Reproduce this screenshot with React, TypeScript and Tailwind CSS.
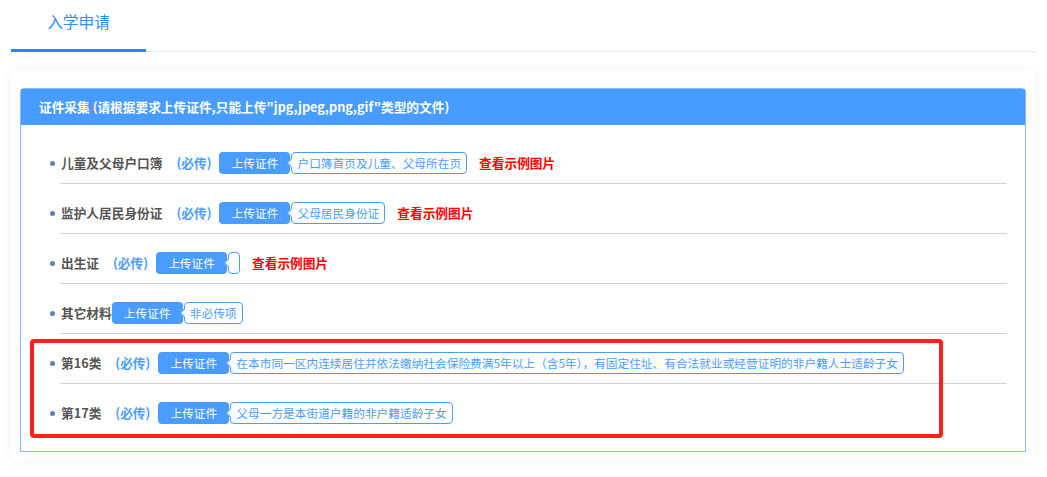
import React from 'react';

interface Item {
  label: string;
  required: boolean;
  tag: string;
  sample: boolean;
}

const items: Item[] = [
  { label: '儿童及父母户口簿', required: true, tag: '户口簿首页及儿童、父母所在页', sample: true },
  { label: '监护人居民身份证', required: true, tag: '父母居民身份证', sample: true },
  { label: '出生证', required: true, tag: '', sample: true },
  { label: '其它材料', required: false, tag: '非必传项', sample: false },
  {
    label: '第16类',
    required: true,
    tag: '在本市同一区内连续居住并依法缴纳社会保险费满5年以上（含5年），有固定住址、有合法就业或经营证明的非户籍人士适龄子女',
    sample: false,
  },
  { label: '第17类', required: true, tag: '父母一方是本街道户籍的非户籍适龄子女', sample: false },
];

function UploadRow({ item }: { item: Item }) {
  return (
    <li className="pt-[18px] pb-[9px] border-b border-[#d2d2d2] last:border-b-0">
      <div className="flex items-center h-[22px]">
        {/* bullet */}
        <span className="w-[5px] h-[5px] rounded-full bg-[#5b82b8] -ml-[10px] mr-[6px] flex-shrink-0" />
        <span className="text-[12.7px] leading-[22px] font-bold text-[#555]">{item.label}</span>
        {item.required && (
          <span className="ml-[14px] mr-[8px] text-[12.7px] leading-[22px] font-bold text-[#4d9fff]">(必传)</span>
        )}
        <button className="h-[22px] w-[71px] rounded-[4px] bg-[#4a9dff] text-white text-[11.7px] leading-[22px] flex-shrink-0">
          上传证件
        </button>
        <span className="relative ml-[1px] h-[22px] min-w-[11px] px-[5px] rounded-[4px] border border-[#4a9dff] bg-white text-[#4a9dff] text-[11.7px] leading-[20px] whitespace-nowrap">
          <span className="absolute -left-[4px] top-[7px] w-[6px] h-[6px] rotate-45 bg-white border-l border-b border-[#4a9dff]" />
          <span className="relative">{item.tag}</span>
        </span>
        {item.sample && (
          <a className="ml-[12px] text-[12.7px] leading-[22px] font-bold text-[#ff0000] cursor-pointer">查看示例图片</a>
        )}
      </div>
    </li>
  );
}

export default function App() {
  return (
    <div className="relative min-h-[477px] bg-white px-[11px] pr-[12px] font-['Noto_Sans_CJK_SC','Microsoft_YaHei',sans-serif]">
      {/* Tabs */}
      <div className="flex border-b border-[#e6e6e6]">
        <div className="w-[135px] h-[52px] -mb-px border-b-[3px] border-[#1f8cf5] pt-[12px] text-center text-[15.7px] leading-[20px] text-[#2d8ff5]">
          入学申请
        </div>
      </div>

      {/* Panel */}
      <div className="mt-[18px] px-[9px] pt-[18px] pb-[9px] shadow-[0_0_10px_rgba(0,0,0,0.05)]">
        <div className="border border-[#86bbff] rounded-t-[4px] bg-white">
          <div className="h-[36px] bg-[#479cff] pl-[18px] flex items-center text-white font-bold text-[12.7px]">
            证件采集 (请根据要求上传证件,只能上传"jpg,jpeg,png,gif"类型的文件)
          </div>
          <ul className="pl-[39px] pr-[18px] pt-[9px] pb-[18px]">
            {items.map((item) => (
              <UploadRow key={item.label} item={item} />
            ))}
          </ul>
        </div>
      </div>

      {/* annotation highlight */}
      <div className="absolute left-[30px] top-[339px] w-[913px] h-[99px] border-[4px] border-[#ff2119] rounded-[4px] pointer-events-none" />
    </div>
  );
}
